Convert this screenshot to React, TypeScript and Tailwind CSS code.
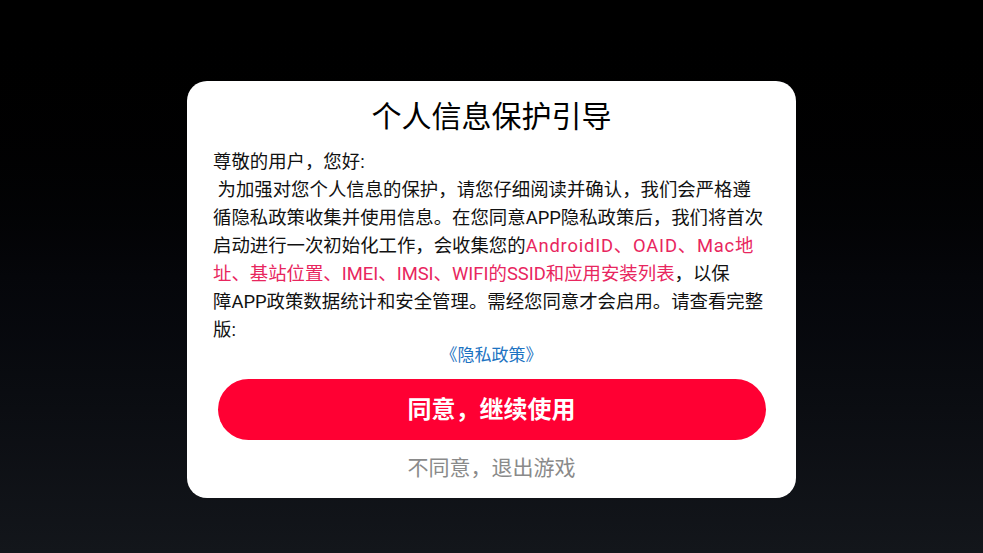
import React from 'react'

const RED = 'text-[#e8265e]'

const App: React.FC = () => {
  return (
    <div className="flex h-[553px] w-full items-start justify-center bg-gradient-to-b from-[#000000] via-[#05060a] to-[#13161b] pt-[81px] font-['Roboto','Noto_Sans_CJK_SC',sans-serif]">
      <div className="flex w-[609px] flex-col rounded-[20px] bg-white px-[26px] pt-[16px] pb-[16px]">
        <h1 className="text-center text-[30px] leading-[40px] font-normal text-black">个人信息保护引导</h1>

        <p className="mt-[11px] text-[18.4px] leading-[28px] text-[#111]">
          尊敬的用户，您好:
          <br />
          &nbsp;为加强对您个人信息的保护，请您仔细阅读并确认，我们会严格遵
          <br />
          循隐私政策收集并使用信息。在您同意APP隐私政策后，我们将首次
          <br />
          启动进行一次初始化工作，会收集您的<span className={`${RED} tracking-[0.8px]`}>AndroidID、OAID、Mac</span><span className={RED}>地</span>
          <br />
          <span className={RED}>址、基站位置、IMEI、IMSI、WIFI的SSID和应用安装列表</span>，以保
          <br />
          障APP政策数据统计和安全管理。需经您同意才会启用。请查看完整
          <br />
          版:
        </p>

        <a className="block text-center text-[17px] leading-[22px] text-[#1d73c2]">《隐私政策》</a>

        <button className="mx-auto mt-[13px] h-[61px] w-[548px] rounded-full bg-[#ff0033] text-[24px] font-bold text-white">
          同意，继续使用
        </button>

        <button className="mt-[14px] text-center text-[21px] leading-[28px] text-[#8a8a8a]">不同意，退出游戏</button>
      </div>
    </div>
  )
}

export default App
